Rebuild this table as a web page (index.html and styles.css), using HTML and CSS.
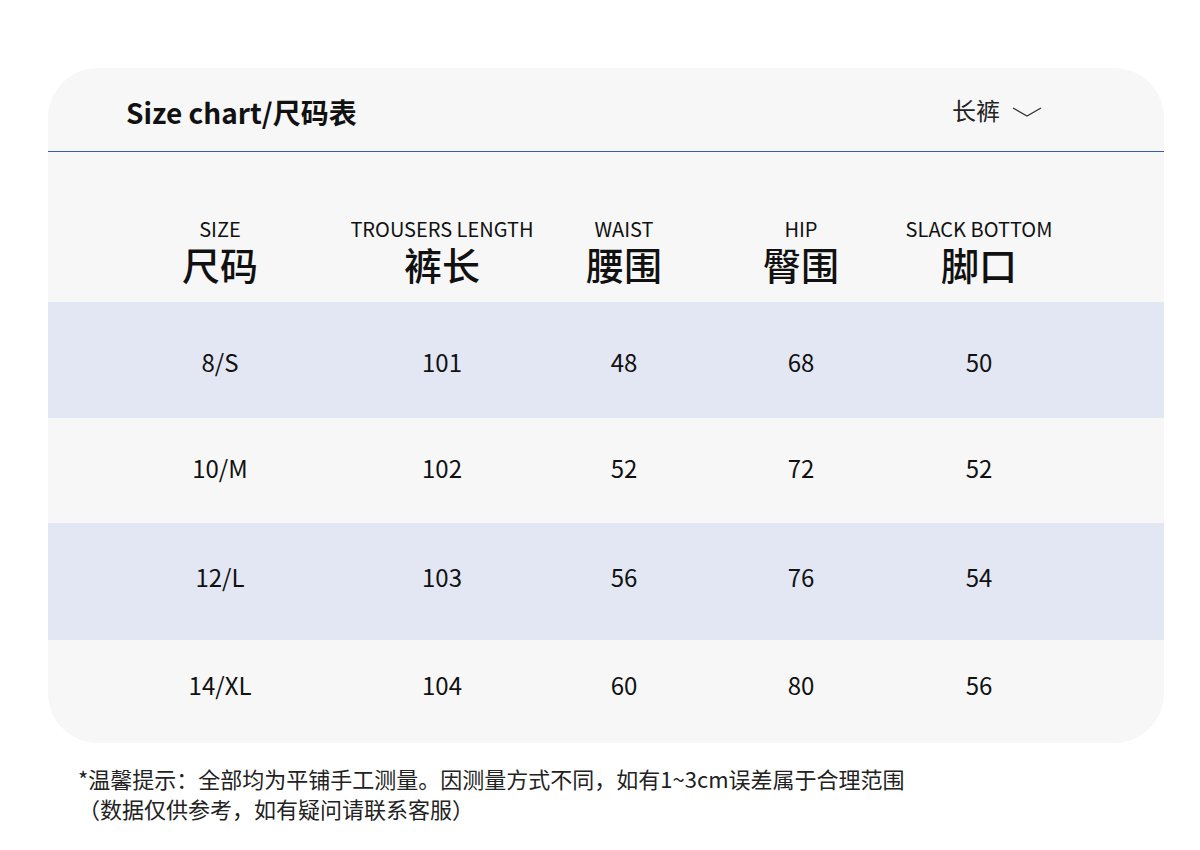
FILE: index.html
```html
<!DOCTYPE html>
<html lang="zh-CN">
<head>
<meta charset="utf-8">
<title>Size chart</title>
<link rel="stylesheet" href="styles.css">
</head>
<body>
<div class="page">
  <section class="card">
    <header class="card-head">
      <h1 class="title">Size chart/尺码表</h1>
      <div class="select">
        <span>长裤</span>
        <svg class="chev" width="30" height="12" viewBox="0 0 30 12"><path d="M1 2 L15 10 L29 2" fill="none" stroke="#333" stroke-width="1.3"/></svg>
      </div>
    </header>
    <div class="row row-head">
      <div class="cell"><span class="en">SIZE</span><span class="zh">尺码</span></div>
      <div class="cell"><span class="en">TROUSERS LENGTH</span><span class="zh">裤长</span></div>
      <div class="cell"><span class="en">WAIST</span><span class="zh">腰围</span></div>
      <div class="cell"><span class="en">HIP</span><span class="zh">臀围</span></div>
      <div class="cell"><span class="en">SLACK BOTTOM</span><span class="zh">脚口</span></div>
    </div>
    <div class="row row-data stripe r1">
      <div class="cell">8/S</div><div class="cell">101</div><div class="cell">48</div><div class="cell">68</div><div class="cell">50</div>
    </div>
    <div class="row row-data r2">
      <div class="cell">10/M</div><div class="cell">102</div><div class="cell">52</div><div class="cell">72</div><div class="cell">52</div>
    </div>
    <div class="row row-data stripe r3">
      <div class="cell">12/L</div><div class="cell">103</div><div class="cell">56</div><div class="cell">76</div><div class="cell">54</div>
    </div>
    <div class="row row-data r4">
      <div class="cell">14/XL</div><div class="cell">104</div><div class="cell">60</div><div class="cell">80</div><div class="cell">56</div>
    </div>
  </section>
  <p class="note">*温馨提示：全部均为平铺手工测量。因测量方式不同，如有1~3cm误差属于合理范围<br>（数据仅供参考，如有疑问请联系客服）</p>
</div>
</body>
</html>
```
FILE: styles.css
```css
* { box-sizing: border-box; }
html, body { margin: 0; padding: 0; background: #ffffff; }
body {
  font-family: "Noto Sans CJK SC", "Noto Sans", sans-serif;
  color: #111;
  width: 1200px;
  height: 850px;
  overflow: hidden;
}
.page { padding: 68px 36px 0 48px; }
.card {
  width: 1116px;
  background: #f7f7f8;
  border-radius: 50px;
  overflow: hidden;
}
.card-head {
  height: 84px;
  border-bottom: 1px solid #3c5ea6;
  display: flex;
  align-items: center;
  justify-content: space-between;
  padding: 4px 122px 0 78px;
}
.title {
  margin: 0;
  font-size: 28px;
  font-weight: 700;
  color: #111;
}
.select {
  display: flex;
  align-items: center;
  gap: 12px;
  font-size: 24px;
  color: #222;
  padding-bottom: 4px;
}
.chev { margin-top: 4px; }
.row {
  display: grid;
  grid-template-columns: 200px 244px 120px 234px 122px;
  padding-left: 72px;
}
.cell {
  display: flex;
  flex-direction: column;
  align-items: center;
  justify-content: center;
  white-space: nowrap;
}
.row-head { height: 150px; padding-top: 64px; }
.row-head .cell { justify-content: flex-start; }
.en { font-size: 20px; line-height: 26px; color: #111; }
.zh { font-size: 38px; line-height: 44px; color: #111; font-weight: 500; }
.row-data .cell { font-size: 24px; color: #111; }
.stripe { background: #e3e7f3; }
.r1 { height: 116px; padding-top: 2px; }
.r2 { height: 105px; padding-bottom: 6px; }
.r3 { height: 117px; padding-bottom: 10px; }
.r4 { height: 103px; padding-bottom: 14px; }
.note {
  margin: 20px 0 0 30px;
  font-size: 22px;
  line-height: 30px;
  color: #222;
}
```
